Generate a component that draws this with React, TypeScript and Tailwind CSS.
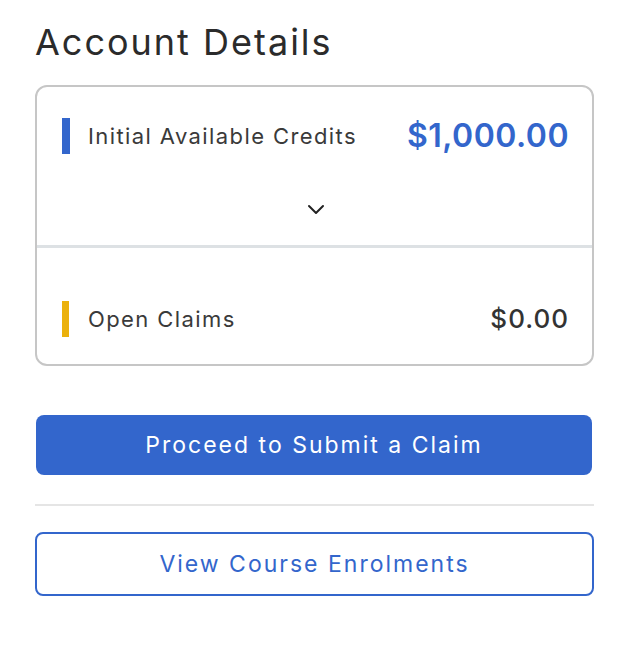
export default function App() {
  return (
    <div className="w-[620px] h-[650px] bg-white pl-[35px] pr-[26px] font-['Inter',sans-serif] text-[#333]">
      <h1 className="pt-[18px] text-[36px] leading-[48px] tracking-[2px] text-[#2b2b2b]">Account Details</h1>

      <div className="mt-[19px] rounded-[12px] border-2 border-[#c6c6c6] overflow-hidden">
        <div className="pl-[25px] pr-[23px] pt-[31px]">
          <div className="flex items-center justify-between h-[36px]">
            <div className="flex items-center gap-[18px]">
              <span className="w-[8px] h-[36px] bg-[#3366cc]"></span>
              <span className="text-[22px] leading-none tracking-[1.4px] text-[#3a3a3a]">Initial Available Credits</span>
            </div>
            <span className="text-[32px] leading-none font-semibold tracking-[0.5px] text-[#3366cc]">$1,000.00</span>
          </div>
          <div className="flex justify-center pt-[50px] pb-[30px]">
            <svg width="18" height="11" viewBox="0 0 18 11" fill="none">
              <path d="M2 2 L9 9 L16 2" stroke="#222" strokeWidth="2" strokeLinecap="round" strokeLinejoin="round" />
            </svg>
          </div>
        </div>
        <div className="h-[3px] bg-[#dde1e4]"></div>
        <div className="pl-[25px] pr-[23px] pt-[53px] pb-[27px] flex items-center justify-between">
          <div className="flex items-center gap-[19px]">
            <span className="w-[7px] h-[36px] bg-[#ebb10c]"></span>
            <span className="text-[22px] leading-none tracking-[1.4px] text-[#3a3a3a]">Open Claims</span>
          </div>
          <span className="text-[26px] leading-none font-medium tracking-[1px] text-[#333]">$0.00</span>
        </div>
      </div>

      <button className="mt-[49px] ml-[1px] w-[556px] h-[60px] rounded-[8px] bg-[#3366cc] text-white text-[23px] tracking-[2px]">
        Proceed to Submit a Claim
      </button>

      <div className="mt-[29px] h-[2px] bg-[#e5e5e5]"></div>

      <button className="mt-[26px] w-[559px] h-[64px] rounded-[8px] border-2 border-[#3366cc] text-[#3366cc] text-[23px] tracking-[2px]">
        View Course Enrolments
      </button>
    </div>
  );
}
